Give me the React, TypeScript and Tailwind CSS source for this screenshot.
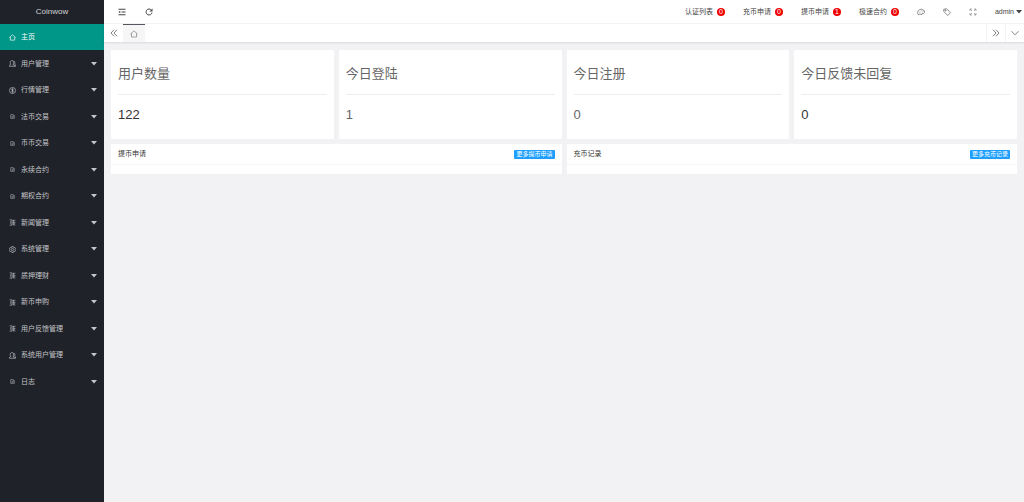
import type { ReactNode } from "react";

type IconName =
  | "home"
  | "user"
  | "dollar"
  | "file"
  | "template"
  | "gear"
  | "shrink"
  | "refresh"
  | "prev"
  | "next"
  | "down"
  | "theme"
  | "note"
  | "screen";

const ICONS: Record<IconName, ReactNode> = {
  home: <path d="M.8 8.200 8 1.800l7.200 6.400M3 6.800V14h10V6.800" />,
  user: (
    <>
      <path d="M1 14.300V12l3.200-2.200C3 8.500 2.800 7 2.800 5.500 2.800 3 4.300 1.300 6.600 1.300s3.800 1.700 3.800 4.200c0 1.500-.3 3-1.400 4.300L12 12v2.300z" />
      <path d="M10.500 2.500c1.900.1 3 1.500 3 3.500 0 1.300-.3 2.400-1.100 3.500l2.800 1.800v3H12" />
    </>
  ),
  dollar: (
    <>
      <circle cx="8" cy="8" r="7" />
      <path d="M10.500 5.700C9.700 4.200 5.700 4.300 5.700 6.300c0 2.100 4.800 1.300 4.800 3.500 0 2-4.200 2.200-5 .5M8 3v10" />
    </>
  ),
  file: <path d="M2 2h8l4 4v8H2zM10 2v4h4M5 8.500h6M5 11.500h6" />,
  template: <path d="M1.500 2H7v12H1.500M4 5v6M10 2v12M10 3h4.500M10 7.500h4M14.500 8.500 11 11M10 13.500h4.500" />,
  gear: (
    <>
      <path d="m6.500 1-.4 2-1.700 1-2-.7L.9 5.900l1.500 1.300v1.600L.9 10.100l1.500 2.600 2-.7 1.700 1 .4 2h3l.4-2 1.700-1 2 .7 1.500-2.600-1.500-1.300V7.200l1.500-1.300-1.500-2.600-2 .7-1.700-1-.4-2z" />
      <circle cx="8" cy="8" r="2.500" />
    </>
  ),
  shrink: (
    <>
      <path d="M1 2.500h14M7 8h8M1 13.500h14" strokeWidth="2" />
      <path d="M4.500 5.300v5.400L1 8z" fill="currentColor" stroke="none" />
    </>
  ),
  refresh: (
    <>
      <path d="M12.800 4.200A6 6 0 1 0 14 9.300" strokeWidth="2" />
      <path d="M15 1v6H9z" fill="currentColor" stroke="none" />
    </>
  ),
  prev: <path d="M8 1.500 2 8l6 6.500M14 1.500 8 8l6 6.500" />,
  next: <path d="m2 1.500 6 6.500-6 6.500M8 1.500 14 8l-6 6.500" />,
  down: <path d="m1 4.500 7 7 7-7" />,
  theme: (
    <>
      <path d="M2.500 13.500C-.5 8 3 2.500 8.500 2.500c4 0 6.500 2.500 6.500 6 0 2-1.500 2.500-3 2.200-2-.4-3 .5-2.500 2.800-1.500-1.500-4-1.500-7 0z" />
      <path d="M5 8.500h1.500M7.500 5.500H9M11 6.500h1.500" />
    </>
  ),
  note: (
    <>
      <path d="M1.500 2.500 7 1.500l8 8-5.500 5.500-8-8z" />
      <circle cx="5" cy="5" r="1.200" />
    </>
  ),
  screen: <path d="M2 5.500V2h3.500M2 2l4 4M10.500 2H14v3.500M14 2l-4 4M2 10.500V14h3.500M2 14l4-4M14 10.500V14h-3.500M14 14l-4-4" />,
};

function Icon({ name, className }: { name: IconName; className: string }) {
  return (
    <svg
      viewBox="0 0 16 16"
      fill="none"
      stroke="currentColor"
      strokeWidth="1.5"
      className={`shrink-0 ${className}`}
      aria-hidden
    >
      {ICONS[name]}
    </svg>
  );
}

function Caret() {
  return (
    <svg viewBox="0 0 6 4" fill="currentColor" className="h-[4px] w-[6px] shrink-0" aria-hidden>
      <path d="M0 0h6L3 3.500z" />
    </svg>
  );
}

const MENU: { icon: IconName; label: string }[] = [
  { icon: "home", label: "主页" },
  { icon: "user", label: "用户管理" },
  { icon: "dollar", label: "行情管理" },
  { icon: "file", label: "法币交易" },
  { icon: "file", label: "币币交易" },
  { icon: "file", label: "永续合约" },
  { icon: "file", label: "期权合约" },
  { icon: "template", label: "新闻管理" },
  { icon: "gear", label: "系统管理" },
  { icon: "template", label: "质押理财" },
  { icon: "template", label: "新币申购" },
  { icon: "template", label: "用户反馈管理" },
  { icon: "user", label: "系统用户管理" },
  { icon: "file", label: "日志" },
];

const NOTICES = [
  { label: "认证列表", count: 0 },
  { label: "充币申请", count: 0 },
  { label: "提币申请", count: 1 },
  { label: "极速合约", count: 0 },
];

const STATS = [
  { title: "用户数量", value: 122, color: "text-[#333]" },
  { title: "今日登陆", value: 1, color: "text-[#666]" },
  { title: "今日注册", value: 0, color: "text-[#666]" },
  { title: "今日反馈未回复", value: 0, color: "text-[#333]" },
];

const LISTS = [
  { title: "提币申请", more: "更多提币申请" },
  { title: "充币记录", more: "更多充币记录" },
];

function Sidebar() {
  return (
    <aside className="w-[104px] shrink-0 bg-[#20222a] text-[#c4c5c8]">
      <div className="flex h-6 items-center justify-center text-[8px] text-[#d2d3d4]">
        Coinwow
      </div>
      <nav>
        <ul>
          {MENU.map(({ icon, label }, i) => (
            <li key={label} className="odd:h-[26px] even:h-[27px]">
              <a
                href="#"
                className={`flex h-full items-center pr-[7px] pl-[9px] ${
                  i === 0 ? "bg-[#009688] text-white" : ""
                }`}
              >
                <Icon
                  name={icon}
                  className={icon === "file" ? "mx-px size-[5px]" : "size-[7px]"}
                />
                <span className="ml-[5px] flex-1">{label}</span>
                {i > 0 && <Caret />}
              </a>
            </li>
          ))}
        </ul>
      </nav>
    </aside>
  );
}

function Header() {
  return (
    <header className="flex h-6 items-center justify-between border-b border-[#f4f4f4] bg-white pr-[2px] pl-[14px] text-[#444]">
      <div className="flex items-center gap-[19px]">
        <button type="button" aria-label="侧边伸缩">
          <Icon name="shrink" className="size-[8px]" />
        </button>
        <button type="button" aria-label="刷新">
          <Icon name="refresh" className="size-[8px]" />
        </button>
      </div>
      <div className="flex items-center gap-[18px]">
        {NOTICES.map(({ label, count }) => (
          <a key={label} href="#" className="flex items-center gap-1">
            {label}
            <span className="flex size-[8px] items-center justify-center rounded-full bg-[#f00000] text-[7px] text-white">
              {count}
            </span>
          </a>
        ))}
        <button type="button" aria-label="主题" className="text-[#666]">
          <Icon name="theme" className="size-[8px]" />
        </button>
        <button type="button" aria-label="便签" className="text-[#666]">
          <Icon name="note" className="size-[8px]" />
        </button>
        <button type="button" aria-label="全屏" className="text-[#888]">
          <Icon name="screen" className="size-[8px]" />
        </button>
        <button type="button" className="flex items-center gap-[2px]">
          admin
          <Caret />
        </button>
      </div>
    </header>
  );
}

function TabBar() {
  return (
    <div className="flex h-[18px] bg-white text-[#555] shadow-[0_1px_2px_rgba(0,0,0,0.1)]">
      <button type="button" aria-label="向左" className="flex w-[19px] items-center justify-center">
        <Icon name="prev" className="size-[8px]" />
      </button>
      <button
        type="button"
        aria-label="主页"
        className="flex w-[22px] items-center justify-center border-t border-[#54565d] bg-[#f6f6f6] text-[#888]"
      >
        <Icon name="home" className="size-[8px]" />
      </button>
      <button
        type="button"
        aria-label="向右"
        className="ml-auto flex w-[19px] items-center justify-center border-l border-[#f4f4f4]"
      >
        <Icon name="next" className="size-[8px]" />
      </button>
      <button
        type="button"
        aria-label="更多"
        className="flex w-[19px] items-center justify-center border-l border-[#f4f4f4]"
      >
        <Icon name="down" className="size-[8px]" />
      </button>
    </div>
  );
}

export default function App() {
  return (
    <div className="flex min-h-screen bg-[#f2f2f4] font-['Liberation_Sans','Noto_Sans_CJK_SC',sans-serif] text-[7px] leading-[10px]">
      <Sidebar />
      <div className="flex min-w-0 flex-1 flex-col">
        <Header />
        <TabBar />
        <main className="flex flex-col gap-[5px] px-[7px] py-2">
          <div className="grid grid-cols-4 gap-[5px]">
            {STATS.map(({ title, value, color }) => (
              <section key={title} className="h-[89px] rounded-[1px] bg-white px-[7px]">
                <h2 className="flex h-[45px] items-center border-b border-[#eee] pt-1 text-[13px] leading-5 text-[#666]">
                  {title}
                </h2>
                <p className={`pt-[10px] text-[13px] leading-5 ${color}`}>{value}</p>
              </section>
            ))}
          </div>
          <div className="grid grid-cols-2 gap-[5px]">
            {LISTS.map(({ title, more }) => (
              <section key={title} className="h-[30px] rounded-[1px] bg-white">
                <div className="flex h-[21px] items-center justify-between border-b border-[#f8f8f8] px-[7px] text-[#333]">
                  <h3>{title}</h3>
                  <a
                    href="#"
                    className="rounded-[1px] bg-[#1e9fff] px-[2px] text-[6px] leading-[9px] text-white"
                  >
                    {more}
                  </a>
                </div>
              </section>
            ))}
          </div>
        </main>
      </div>
    </div>
  );
}
